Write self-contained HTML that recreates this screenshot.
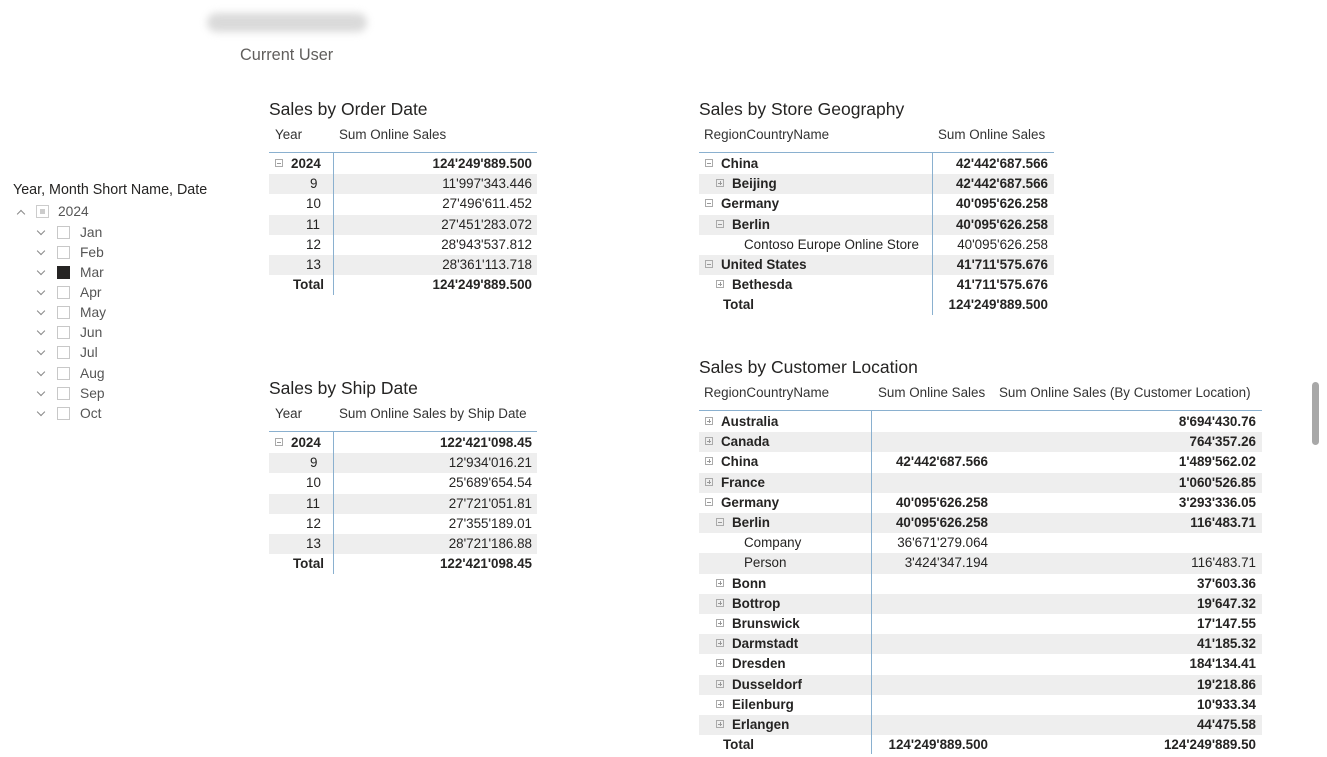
<!DOCTYPE html>
<html><head><meta charset="utf-8"><style>
body{margin:0;width:1327px;height:757px;background:#fff;font-family:"Liberation Sans",sans-serif;color:#252423;position:relative;overflow:hidden}
.a{position:absolute}
.t{font-size:17.5px;color:#252423;white-space:nowrap}
.h{font-size:13.4px;color:#333;white-space:nowrap}
.r{position:absolute;height:20.2px;line-height:20.2px;font-size:13.4px;white-space:nowrap}
.s{background:#eeeeee}
.b{font-weight:bold}
.c{position:absolute;top:0}
.rt{text-align:right}
.vl{position:absolute;width:1px;background:#8ab0cf}
.hl{position:absolute;height:1px;background:#8ab0cf}
.ic{display:inline-block;width:8px;height:8px;border:1px solid #aaa;position:relative;top:-1px;margin-right:8px;box-sizing:border-box}
.ic:before{content:"";position:absolute;left:1px;right:1px;top:3px;height:1px;background:#999}
.ic.p:after{content:"";position:absolute;top:1px;bottom:1px;left:3px;width:1px;background:#999}
.sl{position:absolute;font-size:13.8px;color:#555;height:20px;line-height:20px}
.cb{position:absolute;left:57px;top:3px;width:13px;height:13px;border:1px solid #c8c8c8;box-sizing:border-box}
.ch{position:absolute;left:38px;top:5px;width:5px;height:5px;border-right:1px solid #888;border-bottom:1px solid #888;transform:rotate(45deg)}
</style></head><body>

<div class="a" style="left:207px;top:13px;width:160px;height:19px;background:#dadada;border-radius:10px;filter:blur(4px)"></div>
<div class="a" style="left:240px;top:46px;font-size:16.3px;color:#605e5c">Current User</div>

<!-- Slicer -->
<div class="a" style="left:13px;top:182px;font-size:14.3px;color:#252423">Year, Month Short Name, Date</div>
<div class="sl" style="left:0;top:202px;width:120px"><div class="a" style="left:18px;top:9px;width:5px;height:5px;border-left:1px solid #888;border-top:1px solid #888;transform:rotate(45deg)"></div><div class="a" style="left:36px;top:3px;width:13px;height:13px;border:1px solid #ccc;box-sizing:border-box"><div style="margin:3px;width:5px;height:5px;background:#ccc"></div></div><span class="a" style="left:58px">2024</span></div>
<div class="sl" style="left:0;top:223px;width:120px"><div class="ch"></div><div class="cb"></div><span class="a" style="left:80px">Jan</span></div>
<div class="sl" style="left:0;top:243px;width:120px"><div class="ch"></div><div class="cb"></div><span class="a" style="left:80px">Feb</span></div>
<div class="sl" style="left:0;top:263px;width:120px"><div class="ch"></div><div class="cb" style="background:#252423;border-color:#252423"></div><span class="a" style="left:80px">Mar</span></div>
<div class="sl" style="left:0;top:283px;width:120px"><div class="ch"></div><div class="cb"></div><span class="a" style="left:80px">Apr</span></div>
<div class="sl" style="left:0;top:303px;width:120px"><div class="ch"></div><div class="cb"></div><span class="a" style="left:80px">May</span></div>
<div class="sl" style="left:0;top:323px;width:120px"><div class="ch"></div><div class="cb"></div><span class="a" style="left:80px">Jun</span></div>
<div class="sl" style="left:0;top:343px;width:120px"><div class="ch"></div><div class="cb"></div><span class="a" style="left:80px">Jul</span></div>
<div class="sl" style="left:0;top:364px;width:120px"><div class="ch"></div><div class="cb"></div><span class="a" style="left:80px">Aug</span></div>
<div class="sl" style="left:0;top:384px;width:120px"><div class="ch"></div><div class="cb"></div><span class="a" style="left:80px">Sep</span></div>
<div class="sl" style="left:0;top:404px;width:120px"><div class="ch"></div><div class="cb"></div><span class="a" style="left:80px">Oct</span></div>

<!-- Order Date -->
<div class="a t" style="left:269px;top:99px">Sales by Order Date</div>
<div class="a h" style="left:275px;top:127px">Year</div>
<div class="a h" style="left:339px;top:127px">Sum Online Sales</div>
<div class="hl" style="left:269px;top:152px;width:268px"></div>
<div class="r b" style="left:269px;top:154px;width:268px"><span class="c" style="left:6px"><span class="ic"></span>2024</span><span class="c rt" style="right:5px">124'249'889.500</span></div>
<div class="r s" style="left:269px;top:174.2px;width:268px"><span class="c" style="left:41px">9</span><span class="c" style="right:5px">11'997'343.446</span></div>
<div class="r" style="left:269px;top:194.4px;width:268px"><span class="c" style="left:37px">10</span><span class="c" style="right:5px">27'496'611.452</span></div>
<div class="r s" style="left:269px;top:214.6px;width:268px"><span class="c" style="left:37px">11</span><span class="c" style="right:5px">27'451'283.072</span></div>
<div class="r" style="left:269px;top:234.8px;width:268px"><span class="c" style="left:37px">12</span><span class="c" style="right:5px">28'943'537.812</span></div>
<div class="r s" style="left:269px;top:255px;width:268px"><span class="c" style="left:37px">13</span><span class="c" style="right:5px">28'361'113.718</span></div>
<div class="r b" style="left:269px;top:275.2px;width:268px"><span class="c" style="left:24px">Total</span><span class="c" style="right:5px">124'249'889.500</span></div>
<div class="vl" style="left:333px;top:153px;height:142px"></div>

<!-- Ship Date -->
<div class="a t" style="left:269px;top:378px">Sales by Ship Date</div>
<div class="a h" style="left:275px;top:406px">Year</div>
<div class="a h" style="left:339px;top:406px">Sum Online Sales by Ship Date</div>
<div class="hl" style="left:269px;top:431px;width:268px"></div>
<div class="r b" style="left:269px;top:433px;width:268px"><span class="c" style="left:6px"><span class="ic"></span>2024</span><span class="c" style="right:5px">122'421'098.45</span></div>
<div class="r s" style="left:269px;top:453.2px;width:268px"><span class="c" style="left:41px">9</span><span class="c" style="right:5px">12'934'016.21</span></div>
<div class="r" style="left:269px;top:473.4px;width:268px"><span class="c" style="left:37px">10</span><span class="c" style="right:5px">25'689'654.54</span></div>
<div class="r s" style="left:269px;top:493.6px;width:268px"><span class="c" style="left:37px">11</span><span class="c" style="right:5px">27'721'051.81</span></div>
<div class="r" style="left:269px;top:513.8px;width:268px"><span class="c" style="left:37px">12</span><span class="c" style="right:5px">27'355'189.01</span></div>
<div class="r s" style="left:269px;top:534px;width:268px"><span class="c" style="left:37px">13</span><span class="c" style="right:5px">28'721'186.88</span></div>
<div class="r b" style="left:269px;top:554.2px;width:268px"><span class="c" style="left:24px">Total</span><span class="c" style="right:5px">122'421'098.45</span></div>
<div class="vl" style="left:333px;top:432px;height:142px"></div>

<!-- Store Geography -->
<div class="a t" style="left:699px;top:99px">Sales by Store Geography</div>
<div class="a h" style="left:704px;top:127px">RegionCountryName</div>
<div class="a h" style="left:938px;top:127px">Sum Online Sales</div>
<div class="hl" style="left:699px;top:152px;width:355px"></div>
<div class="r b" style="left:699px;top:154px;width:355px"><span class="c" style="left:6px"><span class="ic"></span>China</span><span class="c" style="right:6px">42'442'687.566</span></div>
<div class="r b s" style="left:699px;top:174.2px;width:355px"><span class="c" style="left:17px"><span class="ic p"></span>Beijing</span><span class="c" style="right:6px">42'442'687.566</span></div>
<div class="r b" style="left:699px;top:194.4px;width:355px"><span class="c" style="left:6px"><span class="ic"></span>Germany</span><span class="c" style="right:6px">40'095'626.258</span></div>
<div class="r b s" style="left:699px;top:214.6px;width:355px"><span class="c" style="left:17px"><span class="ic"></span>Berlin</span><span class="c" style="right:6px">40'095'626.258</span></div>
<div class="r" style="left:699px;top:234.8px;width:355px"><span class="c" style="left:45px">Contoso Europe Online Store</span><span class="c" style="right:6px">40'095'626.258</span></div>
<div class="r b s" style="left:699px;top:255px;width:355px"><span class="c" style="left:6px"><span class="ic"></span>United States</span><span class="c" style="right:6px">41'711'575.676</span></div>
<div class="r b" style="left:699px;top:275.2px;width:355px"><span class="c" style="left:17px"><span class="ic p"></span>Bethesda</span><span class="c" style="right:6px">41'711'575.676</span></div>
<div class="r b" style="left:699px;top:295.4px;width:355px"><span class="c" style="left:24px">Total</span><span class="c" style="right:6px">124'249'889.500</span></div>
<div class="vl" style="left:932px;top:153px;height:162px"></div>

<!-- Customer Location -->
<div class="a t" style="left:699px;top:357px">Sales by Customer Location</div>
<div class="a h" style="left:704px;top:385px">RegionCountryName</div>
<div class="a h" style="left:878px;top:385px">Sum Online Sales</div>
<div class="a h" style="left:999px;top:385px">Sum Online Sales (By Customer Location)</div>
<div class="hl" style="left:699px;top:410px;width:563px"></div>
<div class="r b" style="left:699px;top:412px;width:563px"><span class="c" style="left:6px"><span class="ic p"></span>Australia</span><span class="c" style="right:6px">8'694'430.76</span></div>
<div class="r b s" style="left:699px;top:432.2px;width:563px"><span class="c" style="left:6px"><span class="ic p"></span>Canada</span><span class="c" style="right:6px">764'357.26</span></div>
<div class="r b" style="left:699px;top:452.4px;width:563px"><span class="c" style="left:6px"><span class="ic p"></span>China</span><span class="c" style="right:274px">42'442'687.566</span><span class="c" style="right:6px">1'489'562.02</span></div>
<div class="r b s" style="left:699px;top:472.6px;width:563px"><span class="c" style="left:6px"><span class="ic p"></span>France</span><span class="c" style="right:6px">1'060'526.85</span></div>
<div class="r b" style="left:699px;top:492.8px;width:563px"><span class="c" style="left:6px"><span class="ic"></span>Germany</span><span class="c" style="right:274px">40'095'626.258</span><span class="c" style="right:6px">3'293'336.05</span></div>
<div class="r b s" style="left:699px;top:513px;width:563px"><span class="c" style="left:17px"><span class="ic"></span>Berlin</span><span class="c" style="right:274px">40'095'626.258</span><span class="c" style="right:6px">116'483.71</span></div>
<div class="r" style="left:699px;top:533.2px;width:563px"><span class="c" style="left:45px">Company</span><span class="c" style="right:274px">36'671'279.064</span></div>
<div class="r s" style="left:699px;top:553.4px;width:563px"><span class="c" style="left:45px">Person</span><span class="c" style="right:274px">3'424'347.194</span><span class="c" style="right:6px">116'483.71</span></div>
<div class="r b" style="left:699px;top:573.6px;width:563px"><span class="c" style="left:17px"><span class="ic p"></span>Bonn</span><span class="c" style="right:6px">37'603.36</span></div>
<div class="r b s" style="left:699px;top:593.8px;width:563px"><span class="c" style="left:17px"><span class="ic p"></span>Bottrop</span><span class="c" style="right:6px">19'647.32</span></div>
<div class="r b" style="left:699px;top:614px;width:563px"><span class="c" style="left:17px"><span class="ic p"></span>Brunswick</span><span class="c" style="right:6px">17'147.55</span></div>
<div class="r b s" style="left:699px;top:634.2px;width:563px"><span class="c" style="left:17px"><span class="ic p"></span>Darmstadt</span><span class="c" style="right:6px">41'185.32</span></div>
<div class="r b" style="left:699px;top:654.4px;width:563px"><span class="c" style="left:17px"><span class="ic p"></span>Dresden</span><span class="c" style="right:6px">184'134.41</span></div>
<div class="r b s" style="left:699px;top:674.6px;width:563px"><span class="c" style="left:17px"><span class="ic p"></span>Dusseldorf</span><span class="c" style="right:6px">19'218.86</span></div>
<div class="r b" style="left:699px;top:694.8px;width:563px"><span class="c" style="left:17px"><span class="ic p"></span>Eilenburg</span><span class="c" style="right:6px">10'933.34</span></div>
<div class="r b s" style="left:699px;top:715px;width:563px"><span class="c" style="left:17px"><span class="ic p"></span>Erlangen</span><span class="c" style="right:6px">44'475.58</span></div>
<div class="r b" style="left:699px;top:735.2px;width:563px"><span class="c" style="left:24px">Total</span><span class="c" style="right:274px">124'249'889.500</span><span class="c" style="right:6px">124'249'889.50</span></div>
<div class="vl" style="left:871px;top:411px;height:343px;z-index:2"></div>

<div class="a" style="left:1312px;top:382px;width:7px;height:63px;background:#a8a8a8;border-radius:4px"></div>
</body></html>
